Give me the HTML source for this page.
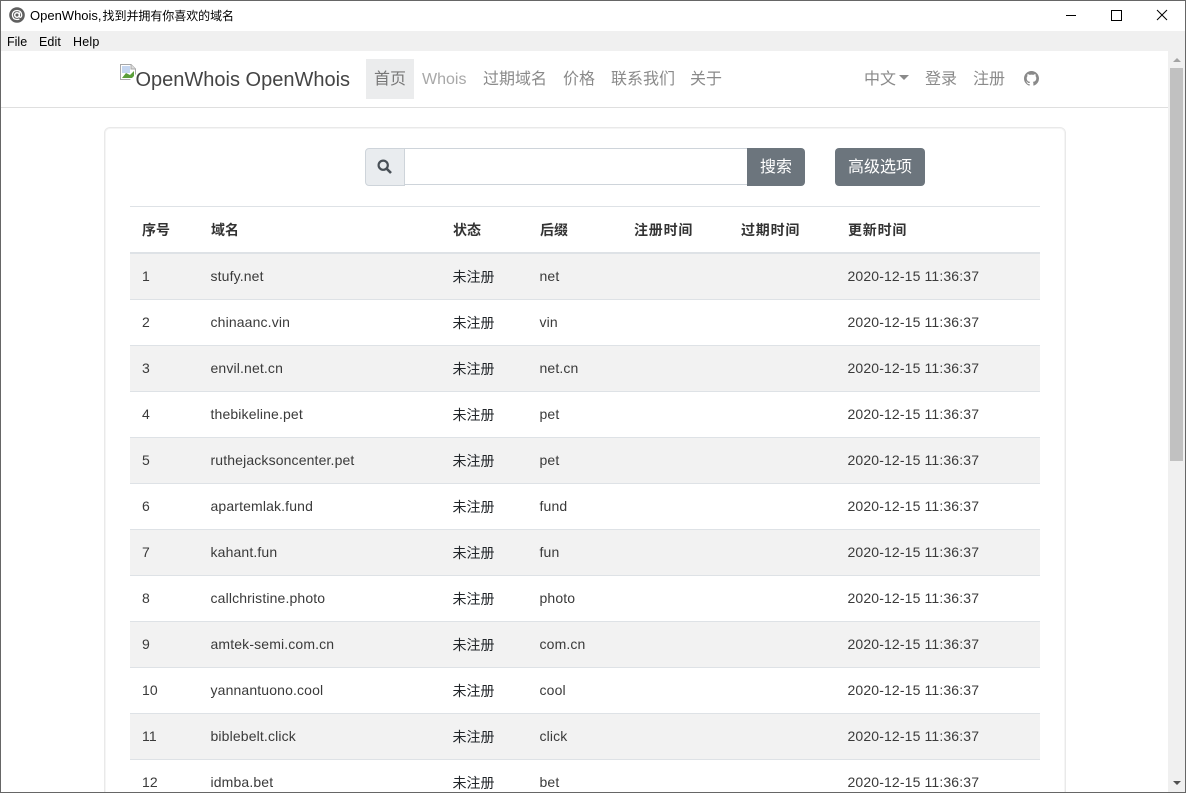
<!DOCTYPE html>
<html lang="zh"><head><meta charset="utf-8"><title>OpenWhois</title>
<style>
html,body{margin:0;padding:0;width:1186px;height:793px;overflow:hidden;background:#fff}
body{position:relative;font-family:"Liberation Sans","Noto Sans CJK SC",sans-serif;font-size:14px;color:#212529}
.a{position:absolute;white-space:nowrap}
.nav{font-size:16px;color:#8a8a8a;top:68px;line-height:24px}
.row{position:absolute;left:130px;width:910px;height:45px;border-bottom:1px solid #dee2e6}
.row.o{background:#f2f2f2}
.row span{position:absolute;top:14px;line-height:16px;white-space:nowrap;color:#3a3a3a;letter-spacing:.14px}
.row .c3{left:322.5px;top:15px;color:#212529;letter-spacing:0}
.c1{left:12px}.c2{left:80.5px}.c4{left:409.5px}.c5{left:717.5px}
.h{font-weight:bold;top:222px;line-height:16px;color:#333}
.w{letter-spacing:.8px}
.btn{background:#6c757d;color:#fff;font-size:16px;line-height:40px;text-align:center;height:38px;top:148px}
</style></head><body>
<!-- window frame -->
<div class="a" style="left:0;top:0;width:1186px;height:1px;background:#666"></div>
<div class="a" style="left:0;top:0;width:1px;height:793px;background:#666"></div>
<div class="a" style="left:1185px;top:0;width:1px;height:793px;background:#666"></div>
<!-- title bar -->
<svg class="a" style="left:9px;top:7px" width="16" height="16" viewBox="0 0 16 16"><circle cx="8" cy="8" r="7.8" fill="#5f5f5f"/><circle cx="8" cy="8" r="2.3" fill="none" stroke="#fff" stroke-width="1.5"/><path d="M10.4 5.4V9.2Q10.6 10.8 11.9 10.1 12.9 9.4 12.6 7.4 12 3.6 8 3.5 3.6 3.6 3.4 8 3.6 12.4 8 12.5 9.4 12.5 10.4 12" fill="none" stroke="#fff" stroke-width="1.3"/></svg>
<div class="a" style="left:30px;top:7px;font-size:13px;line-height:17px;color:#000">OpenWhois,<span style="font-size:12px;letter-spacing:-.05px;margin-left:1px">找到并拥有你喜欢的域名</span></div>
<div class="a" style="left:1066px;top:15px;width:10px;height:1px;background:#000"></div>
<div class="a" style="left:1111px;top:10px;width:9px;height:9px;border:1px solid #000"></div>
<svg class="a" style="left:1156px;top:9px" width="12" height="12" viewBox="0 0 12 12"><path d="M1 1L11 11M11 1L1 11" stroke="#000" stroke-width="1" fill="none"/></svg>
<!-- menu -->
<div class="a" style="left:1px;top:31px;width:1184px;height:20px;background:#f0f0f0"></div>
<div class="a" style="left:7px;top:34px;font-size:12.5px;line-height:16px;color:#000">File</div>
<div class="a" style="left:39px;top:34px;font-size:12.5px;line-height:16px;color:#000;letter-spacing:.1px">Edit</div>
<div class="a" style="left:73px;top:34px;font-size:12.5px;line-height:16px;color:#000;letter-spacing:.2px">Help</div>
<!-- navbar -->
<svg class="a" style="left:120px;top:64px" width="16" height="16" viewBox="0 0 16 16"><path d="M.5.5H11L15.5 5V15.5H.5Z" fill="#fff" stroke="#a8a8a8"/><path d="M11 .5V5H15.5" fill="#ddd" stroke="#a8a8a8"/><rect x="2" y="2" width="8" height="7" fill="#c5d6f0"/><path d="M2 14L6 9 10 11 14 7V14Z" fill="#5a9e3a"/><path d="M10 16L16 10V16Z" fill="#fff"/></svg>
<div class="a" style="left:135.5px;top:69px;font-size:20px;line-height:23px;color:#444">OpenWhois OpenWhois</div>
<div class="a" style="left:366px;top:59px;width:48px;height:40px;background:#ebeced"></div>
<div class="a nav" style="left:374px;color:#777">首页</div>
<div class="a nav" style="left:422px;color:#a8a8a8">Whois</div>
<div class="a nav" style="left:483px">过期域名</div>
<div class="a nav" style="left:563px">价格</div>
<div class="a nav" style="left:611px">联系我们</div>
<div class="a nav" style="left:690px">关于</div>
<div class="a nav" style="left:864px">中文</div>
<div class="a" style="left:899px;top:75px;width:0;height:0;border-left:5px solid transparent;border-right:5px solid transparent;border-top:5px solid #8a8a8a"></div>
<div class="a nav" style="left:925px">登录</div>
<div class="a nav" style="left:973px">注册</div>
<svg class="a" style="left:1024px;top:71px" width="15" height="15" viewBox="0 0 16 16"><path fill="#8a8a8a" d="M8 0C3.58 0 0 3.58 0 8c0 3.54 2.29 6.53 5.47 7.59.4.07.55-.17.55-.38v-1.34c-2.23.48-2.7-1.07-2.7-1.07-.36-.92-.89-1.17-.89-1.17-.73-.5.05-.49.05-.49.8.06 1.23.82 1.23.82.71 1.22 1.87.87 2.33.66.07-.52.28-.87.51-1.07-1.78-.2-3.64-.89-3.64-3.95 0-.87.31-1.59.82-2.15-.08-.2-.36-1.02.08-2.12 0 0 .67-.21 2.2.82A7.7 7.7 0 0 1 8 3.87c.68 0 1.36.09 2 .27 1.53-1.04 2.2-.82 2.2-.82.44 1.1.16 1.92.08 2.12.51.56.82 1.27.82 2.15 0 3.07-1.87 3.75-3.65 3.95.29.25.54.73.54 1.48v2.2c0 .21.15.46.55.38A8.01 8.01 0 0 0 16 8c0-4.42-3.58-8-8-8z"/></svg>
<div class="a" style="left:1px;top:107px;width:1168px;height:1px;background:#dfdfdf"></div>
<!-- card -->
<div class="a" style="left:104px;top:127px;width:960px;height:700px;border:1px solid #e9e9e9;box-shadow:0 0 0 1px #f5f5f5 inset;border-radius:6px;background:#fff"></div>
<!-- search -->
<div class="a" style="left:405px;top:148px;width:342px;height:35px;background:#fff;border:1px solid #ced4da;border-left:0;border-right:0"></div>
<div class="a" style="left:365px;top:148px;width:38px;height:36px;background:#e9ecef;border:1px solid #ced4da;border-radius:4px 0 0 4px"></div>
<svg class="a" style="left:377px;top:159px" width="15" height="15" viewBox="0 0 15 15"><circle cx="6.2" cy="6.2" r="4.6" fill="none" stroke="#495057" stroke-width="2.2"/><path d="M9.8 9.8L14 14" stroke="#495057" stroke-width="2.6"/></svg>
<div class="a btn" style="left:747px;width:58px;border-radius:0 4px 4px 0">搜索</div>
<div class="a btn" style="left:835px;width:90px;border-radius:4px">高级选项</div>
<!-- table head -->
<div class="a" style="left:130px;top:206px;width:910px;height:1px;background:#dee2e6"></div>
<div class="a h" style="left:142px">序号</div>
<div class="a h" style="left:211px">域名</div>
<div class="a h" style="left:453px">状态</div>
<div class="a h" style="left:540px">后缀</div>
<div class="a h w" style="left:634px">注册时间</div>
<div class="a h w" style="left:741px">过期时间</div>
<div class="a h w" style="left:848px">更新时间</div>
<div class="a" style="left:130px;top:252px;width:910px;height:2px;background:#dee2e6"></div>
<!-- rows -->
<div class="row o" style="top:254px"><span class="c1">1</span><span class="c2">stufy.net</span><span class="c3">未注册</span><span class="c4">net</span><span class="c5">2020-12-15 11:36:37</span></div>
<div class="row" style="top:300px"><span class="c1">2</span><span class="c2">chinaanc.vin</span><span class="c3">未注册</span><span class="c4">vin</span><span class="c5">2020-12-15 11:36:37</span></div>
<div class="row o" style="top:346px"><span class="c1">3</span><span class="c2">envil.net.cn</span><span class="c3">未注册</span><span class="c4">net.cn</span><span class="c5">2020-12-15 11:36:37</span></div>
<div class="row" style="top:392px"><span class="c1">4</span><span class="c2">thebikeline.pet</span><span class="c3">未注册</span><span class="c4">pet</span><span class="c5">2020-12-15 11:36:37</span></div>
<div class="row o" style="top:438px"><span class="c1">5</span><span class="c2">ruthejacksoncenter.pet</span><span class="c3">未注册</span><span class="c4">pet</span><span class="c5">2020-12-15 11:36:37</span></div>
<div class="row" style="top:484px"><span class="c1">6</span><span class="c2">apartemlak.fund</span><span class="c3">未注册</span><span class="c4">fund</span><span class="c5">2020-12-15 11:36:37</span></div>
<div class="row o" style="top:530px"><span class="c1">7</span><span class="c2">kahant.fun</span><span class="c3">未注册</span><span class="c4">fun</span><span class="c5">2020-12-15 11:36:37</span></div>
<div class="row" style="top:576px"><span class="c1">8</span><span class="c2">callchristine.photo</span><span class="c3">未注册</span><span class="c4">photo</span><span class="c5">2020-12-15 11:36:37</span></div>
<div class="row o" style="top:622px"><span class="c1">9</span><span class="c2">amtek-semi.com.cn</span><span class="c3">未注册</span><span class="c4">com.cn</span><span class="c5">2020-12-15 11:36:37</span></div>
<div class="row" style="top:668px"><span class="c1">10</span><span class="c2">yannantuono.cool</span><span class="c3">未注册</span><span class="c4">cool</span><span class="c5">2020-12-15 11:36:37</span></div>
<div class="row o" style="top:714px"><span class="c1">11</span><span class="c2">biblebelt.click</span><span class="c3">未注册</span><span class="c4">click</span><span class="c5">2020-12-15 11:36:37</span></div>
<div class="row" style="top:760px"><span class="c1">12</span><span class="c2">idmba.bet</span><span class="c3">未注册</span><span class="c4">bet</span><span class="c5">2020-12-15 11:36:37</span></div>
<!-- scrollbar -->
<div class="a" style="left:1168px;top:51px;width:17px;height:741px;background:#f0f0f0"></div>
<div class="a" style="left:1170px;top:68px;width:13px;height:393px;background:#c1c1c1"></div>
<div class="a" style="left:1173px;top:58px;width:0;height:0;border-left:4px solid transparent;border-right:4px solid transparent;border-bottom:4px solid #a3a3a3"></div>
<div class="a" style="left:1173px;top:781px;width:0;height:0;border-left:4px solid transparent;border-right:4px solid transparent;border-top:4px solid #505050"></div>
<div class="a" style="left:0;top:792px;width:1186px;height:1px;background:#666"></div>
</body></html>
